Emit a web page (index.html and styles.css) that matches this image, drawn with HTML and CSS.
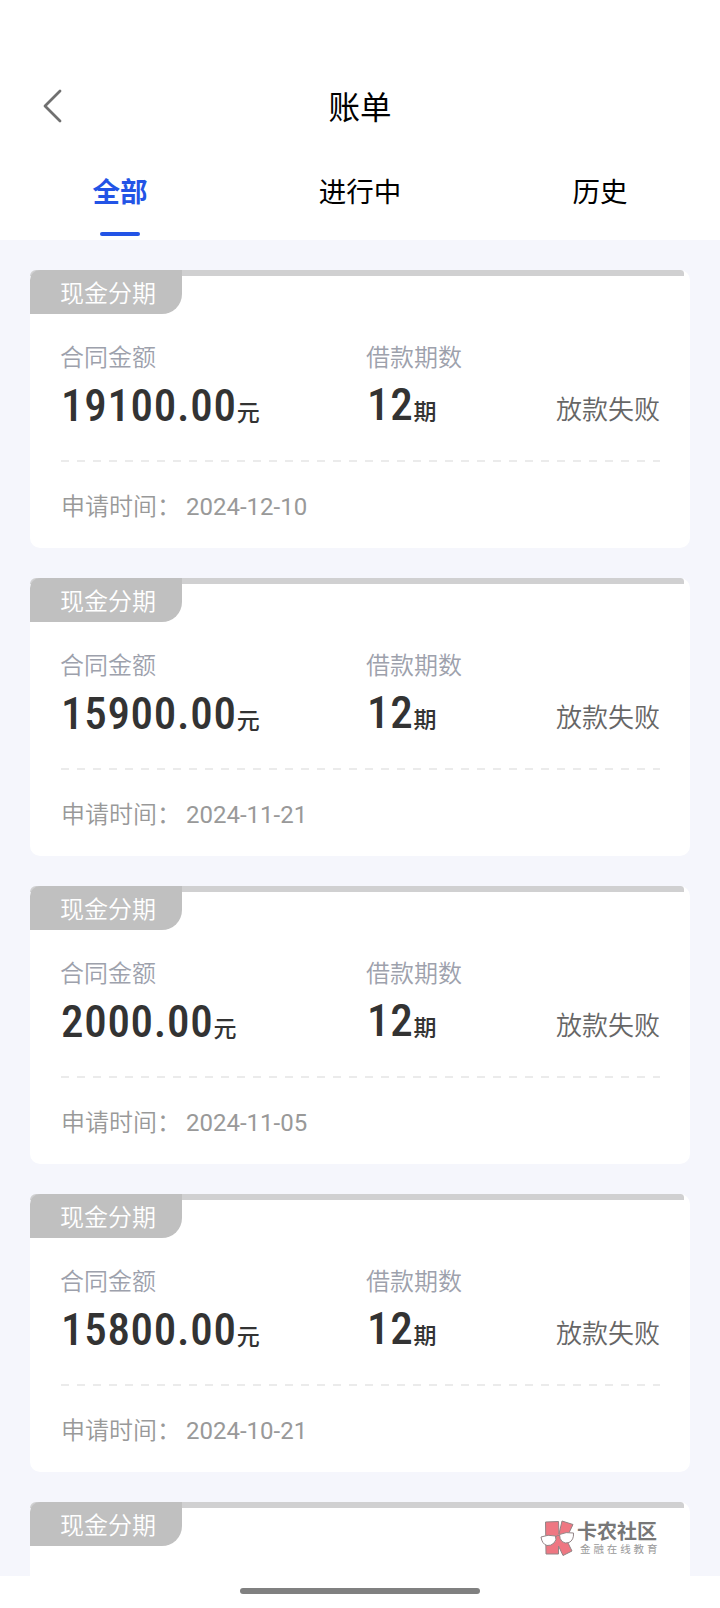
FILE: index.html
```html
<!DOCTYPE html>
<html lang="zh-CN">
<head>
    <meta charset="UTF-8">
    <meta name="viewport" content="width=device-width, initial-scale=1.0">
    <title>账单</title>
    <link rel="stylesheet" href="styles.css">
</head>
<body>
    <div class="page">
        <header class="header">
            <svg class="back" width="20" height="36" viewBox="0 0 20 36">
                <path d="M18 3 L3 18 L18 33" fill="none" stroke="#707070" stroke-width="2.8" stroke-linecap="round" stroke-linejoin="round"/>
            </svg>
            <h1>账单</h1>
        </header>
        <nav class="tabs">
            <div class="tab active">全部</div>
            <div class="tab">进行中</div>
            <div class="tab">历史</div>
        </nav>
        <main class="list" id="list"></main>
        <footer class="footer">
            <div class="home-bar"></div>
        </footer>
        <div class="watermark">
            <svg width="35" height="37" viewBox="0 0 35 37">
                <g fill="#ee7782" stroke="#938486" stroke-width="1" stroke-linejoin="round">
                    <path d="M5.5 2 L18.5 1.500 L19 14 L22 1 L33 4.500 L26 19 L32 31 L23 35.500 L18.500 26 L18.500 34 L6 34 Z"/>
                </g>
                <g fill="#fff" stroke="#938486" stroke-width="1">
                    <path d="M1 17 Q8 14 15.500 16 Q17 20 14 23 Q11 26 7 25.500 Q2 24 1 17 Z"/>
                    <path d="M19.500 14.500 Q26 11.500 33.500 13 Q34 20 29 22.500 Q25 24 22 21.500 Q19.500 19 19.500 14.500 Z"/>
                    <path d="M15.500 17 Q17.500 14.500 19.500 15.500" fill="none"/>
                </g>
            </svg>
            <div class="watermark-text">
                <b>卡农社区</b>
                <span>金融在线教育</span>
            </div>
        </div>
    </div>

    <script>
        const bills = [
            { amount: '19100.00', periods: 12, date: '2024-12-10' },
            { amount: '15900.00', periods: 12, date: '2024-11-21' },
            { amount: '2000.00', periods: 12, date: '2024-11-05' },
            { amount: '15800.00', periods: 12, date: '2024-10-21' }
        ];

        const cards = bills.map(bill => `
            <section class="card">
                <div class="strip"></div>
                <div class="tag">现金分期</div>
                <div class="info">
                    <div class="amount">
                        <div class="label">合同金额</div>
                        <div class="value"><span class="num">${bill.amount}</span><span class="unit">元</span></div>
                    </div>
                    <div class="periods">
                        <div class="label">借款期数</div>
                        <div class="value"><span class="num">${bill.periods}</span><span class="unit">期</span></div>
                    </div>
                    <div class="status">放款失败</div>
                </div>
                <div class="divider"></div>
                <div class="time"><span>申请时间：</span><span class="date">${bill.date}</span></div>
            </section>
        `);

        // next card is cut off by the bottom of the list
        cards.push('<section class="card"><div class="strip"></div><div class="tag">现金分期</div></section>');
        document.getElementById('list').innerHTML = cards.join('');
    </script>
</body>
</html>
```
FILE: styles.css
```css
* {
    box-sizing: border-box;
}
body {
    margin: 0;
    background-color: #fff;
    font-family: Roboto, "Noto Sans CJK SC", sans-serif;
}
.page {
    position: relative;
    display: flex;
    flex-direction: column;
    height: 1608px;
    overflow: hidden;
}
.header {
    display: flex;
    align-items: center;
    height: 152px;
    padding: 60px 42px 0;
}
.back {
    margin-top: -1px;
}
h1 {
    flex: 1;
    margin: 5px 20px 0 0;
    font-size: 31.5px;
    font-weight: 400;
    line-height: 40px;
    text-align: center;
    color: #000;
}
.tabs {
    display: flex;
    height: 88px;
}
.tab {
    flex: 1;
    display: flex;
    flex-direction: column;
    align-items: center;
    padding-top: 21px;
    font-size: 27.5px;
    line-height: 40px;
    color: #000;
}
.tab.active {
    font-weight: 600;
    color: #2354e6;
}
.tab.active::after {
    content: "";
    width: 40px;
    height: 4px;
    margin-top: 19px;
    border-radius: 2px;
    background-color: #2354e6;
}
.list {
    display: flex;
    flex-direction: column;
    gap: 30px;
    height: 1336px;
    padding: 30px 30px 0;
    overflow: hidden;
    background-color: #f5f6fc;
}
.card {
    flex-shrink: 0;
    height: 278px;
    border-radius: 10px;
    background-color: #fff;
}
.strip {
    height: 6px;
    margin-right: 6px;
    border-radius: 10px 6px 0 0;
    background-color: #d0d0d1;
}
.tag {
    width: 152px;
    height: 44px;
    margin-top: -6px;
    padding-left: 30px;
    border-radius: 10px 0 20px 0;
    background-color: #c0c0c0;
    color: #fff;
    font-size: 24px;
    font-weight: 350;
    line-height: 49px;
}
.info {
    display: flex;
    height: 146px;
    padding: 28px 30px 0;
}
.amount {
    width: 306px;
}
.periods {
    width: 150px;
}
.label {
    font-size: 24px;
    font-weight: 350;
    line-height: 32px;
    color: #9da1ac;
}
.value {
    display: flex;
    align-items: baseline;
    height: 54px;
    padding: 5px 0 0 1px;
    line-height: 54px;
    color: #333;
}
.periods .value {
    padding-top: 4px;
}
.num {
    font-size: 45px;
    font-weight: 500;
    font-stretch: 80%;
    letter-spacing: 0.7px;
}
.unit {
    font-size: 23px;
    font-weight: 500;
}
.status {
    flex: 1;
    padding-top: 49px;
    font-size: 26px;
    font-weight: 350;
    line-height: 38px;
    text-align: right;
    color: #666;
}
.divider {
    height: 2px;
    margin: 0 30px 0 31px;
    background: repeating-linear-gradient(90deg, #ebebeb 0 8px, transparent 8px 16px);
}
.time {
    display: flex;
    padding: 29px 31px 0;
    font-size: 24px;
    font-weight: 350;
    line-height: 32px;
    color: #999;
}
.date {
    margin-left: 5px;
    font-weight: 400;
}
.footer {
    display: flex;
    justify-content: center;
    height: 32px;
    padding-top: 12px;
}
.home-bar {
    width: 240px;
    height: 6px;
    border-radius: 3px;
    background-color: #808080;
}
/* floats over the list in the bottom right corner */
.watermark {
    position: absolute;
    top: 1520px;
    left: 540px;
    display: flex;
    gap: 2px;
}
.watermark-text {
    display: flex;
    flex-direction: column;
    color: #777;
}
.watermark-text b {
    font-size: 20px;
    line-height: 24px;
}
.watermark-text span {
    padding-left: 3px;
    font-size: 10.5px;
    line-height: 11px;
    letter-spacing: 2.9px;
    color: #999;
}
```
